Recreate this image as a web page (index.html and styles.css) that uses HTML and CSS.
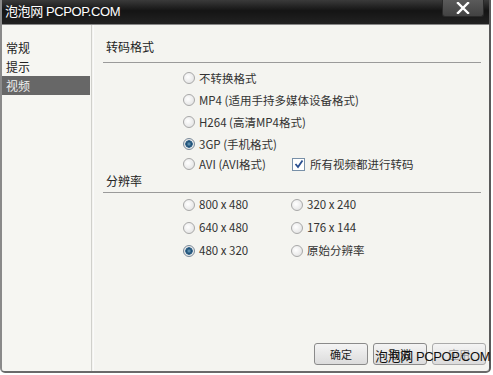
FILE: index.html
```html
<!DOCTYPE html>
<html>
<head>
<meta charset="utf-8">
<link rel="stylesheet" href="styles.css">
</head>
<body>
<div class="window">
  <div class="titlebar">
    <span class="title">泡泡网 PCPOP.COM</span>
    <span class="close"><svg width="14" height="12" viewBox="0 0 14 12"><path d="M2 1 L12 11 M12 1 L2 11" stroke="#fff" stroke-width="2.4" stroke-linecap="square"/></svg></span>
  </div>
  <div class="body">
    <div class="sidebar">
      <div class="nav">常规</div>
      <div class="nav">提示</div>
      <div class="nav active">视频</div>
    </div>
    <div class="content">
      <div class="heading">转码格式</div>
      <div class="rule"></div>
      <div class="formats">
        <div class="row"><span class="radio"></span>不转换格式</div>
        <div class="row"><span class="radio"></span>MP4 (适用手持多媒体设备格式)</div>
        <div class="row"><span class="radio"></span>H264 (高清MP4格式)</div>
        <div class="row"><span class="radio on"></span>3GP (手机格式)</div>
        <div class="row">
          <span class="cell"><span class="radio"></span>AVI (AVI格式)</span>
          <span class="cell wide"><span class="check"><svg width="10" height="10" viewBox="0 0 10 10"><path d="M1.5 5 L4 8 L8.5 1.5" stroke="#2a4f8f" stroke-width="1.8" fill="none"/></svg></span>所有视频都进行转码</span>
        </div>
      </div>
      <div class="heading h2">分辨率</div>
      <div class="rule"></div>
      <div class="res">
        <div class="row"><span class="radio"></span>800 x 480</div>
        <div class="row"><span class="radio"></span>320 x 240</div>
        <div class="row"><span class="radio"></span>640 x 480</div>
        <div class="row"><span class="radio"></span>176 x 144</div>
        <div class="row"><span class="radio on"></span>480 x 320</div>
        <div class="row"><span class="radio"></span>原始分辨率</div>
      </div>
      <div class="buttons">
        <span class="btn">确定</span>
        <span class="btn">取消</span>
        <span class="btn disabled">应用</span>
      </div>
    </div>
  </div>
</div>
<div class="watermark">泡泡网 PCPOP.COM</div>
</body>
</html>
```

FILE: styles.css
```css
html, body { margin: 0; padding: 0; background: #fff; }
body { font-family: "Noto Sans CJK SC", "DejaVu Sans", sans-serif; position: relative; }
.window {
  position: relative;
  width: 491px;
  height: 373px;
  border-right: 2px solid #5a5a5a;
  border-bottom: 2px solid #6a6a6a;
  border-left: 2px solid #8a8a8a;
  border-bottom-left-radius: 5px;
  border-bottom-right-radius: 5px;
  background: #f4f4f0;
  display: flex;
  flex-direction: column;
  overflow: hidden;
  box-sizing: border-box;
}
.titlebar {
  height: 25px;
  flex: none;
  background: linear-gradient(#3a3a3a, #141414 45%, #222 100%);
  display: flex;
  align-items: flex-start;
  padding-left: 3px;
  border-bottom: 1px solid #888;
  box-sizing: border-box;
}
.title {
  color: #fff;
  font-family: "Liberation Sans", "Noto Sans CJK SC", sans-serif;
  font-size: 13px;
  line-height: 16px;
  margin-top: 4px;
  letter-spacing: -0.4px;
}
.close {
  margin-left: auto;
  margin-right: 5px;
  width: 40px;
  height: 16px;
  background: linear-gradient(#5a5a5a, #424242);
  border: 1px solid #2a2a2a;
  border-top: none;
  border-radius: 0 0 3px 3px;
  display: flex;
  align-items: center;
  justify-content: center;
}
.body { flex: 1; display: flex; }
.sidebar {
  width: 89px;
  flex: none;
  border-right: 1px solid #d0d0cc;
  padding-top: 13px;
  background: #f6f6f2;
}
.nav {
  font-size: 12px;
  line-height: 19px;
  height: 19px;
  color: #222;
  padding-left: 4px;
  margin-right: 1px;
}
.nav.active { background: #676767; color: #eee; }
.content {
  flex: 1;
  border-left: 1px solid #fafafa;
  padding-top: 14px;
  display: flex;
  flex-direction: column;
  margin-left: 1px;
}
.heading {
  font-size: 12px;
  line-height: 16px;
  color: #222;
  padding-left: 12px;
}
.rule {
  height: 0;
  border-top: 1px solid #9a9a9a;
  margin: 7px 8px 0 9px;
}
.h2 + .rule { margin-top: 3px; }
.formats { padding-left: 89px; padding-top: 4px; }
.row {
  font-size: 11.5px;
  color: #333;
  height: 22px;
  line-height: 22px;
  display: flex;
  align-items: center;
  white-space: nowrap;
}
.formats .row:last-child { height: 18px; }
.cell { display: flex; align-items: center; width: 109px; }
.cell.wide { width: auto; }
.radio {
  width: 10px;
  height: 10px;
  border-radius: 50%;
  border: 1px solid #a8a8a8;
  background: radial-gradient(circle at 40% 40%, #fff, #ddd);
  margin-right: 4px;
  flex: none;
  box-sizing: content-box;
}
.radio.on {
  background: radial-gradient(circle, #6fa4c4 0, #1f4f74 2.5px, #3d6e94 3.5px, #e8e8e8 4px);
  border-color: #7a8a9a;
}
.check {
  width: 11px;
  height: 11px;
  border: 1px solid #7890a8;
  background: #fff;
  margin-right: 5px;
  display: flex;
  align-items: center;
  justify-content: center;
  flex: none;
}
.res {
  display: grid;
  grid-template-columns: 108px 100px;
  padding-left: 89px;
}
.res .row { height: 23px; line-height: 23px; }
.buttons {
  margin-top: auto;
  margin-bottom: 6px;
  display: flex;
  gap: 5px;
  justify-content: flex-end;
  padding-right: 3px;
}
.btn {
  width: 52px;
  height: 20px;
  border: 1px solid #8a8a8a;
  border-radius: 3px;
  background: linear-gradient(#f4f4f4, #dcdcdc);
  font-size: 11px;
  line-height: 20px;
  text-align: center;
  color: #222;
  box-sizing: content-box;
}
.btn.disabled { color: #999; border-color: #aaa; }
.watermark {
  position: absolute;
  left: 375px;
  top: 349px;
  font-family: "Liberation Sans", "Noto Sans CJK SC", sans-serif;
  font-size: 13px;
  line-height: 16px;
  color: #111;
  letter-spacing: -0.4px;
  white-space: nowrap;
}
```
